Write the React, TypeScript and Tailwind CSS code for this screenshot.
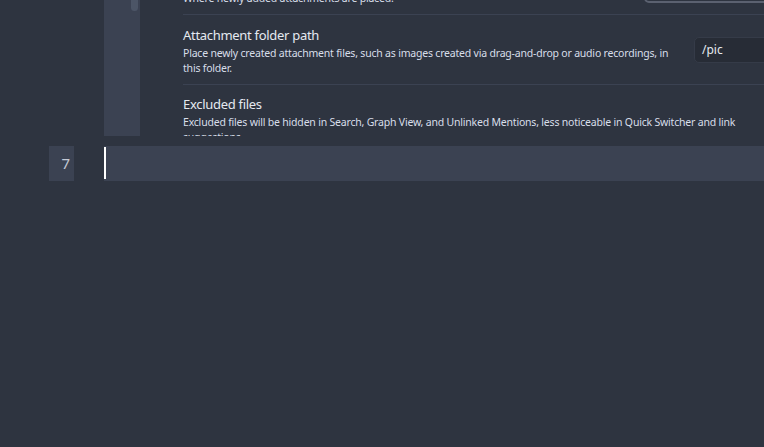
import React from "react";

export default function App() {
  const font = { fontFamily: '"Segoe UI", "Noto Sans", "Open Sans", sans-serif' };
  const title = "text-[13px] leading-[19px] tracking-[-0.3px] text-[#e5e9f0]";
  const desc = "mt-[1px] text-[10.5px] leading-[15px] tracking-[-0.2px] text-[#d8dee9]";
  return (
    <div className="w-[764px] h-[447px] bg-[#2e3440] overflow-hidden flex flex-col" style={font}>
      <div className="h-[136px] flex shrink-0 overflow-hidden">
        <div className="w-[104px] shrink-0" />
        <div className="w-[36px] shrink-0 bg-[#3b4252] relative">
          <div className="absolute left-[27px] top-[-10px] w-[7px] h-[21px] rounded-full bg-[#4c5566]" />
        </div>
        <div className="flex-1 pl-[43px] overflow-hidden">
          <div className="-mt-[40px]">
            {/* item 0 */}
            <div className="flex items-center pt-[11px] pb-[8px]">
              <div className="flex-1 min-w-0">
                <div className={title}>Default location for new attachments</div>
                <div className={desc}>Where newly added attachments are placed.</div>
              </div>
              <div className="w-[140px] h-[26px] shrink-0 ml-[8px] -mr-[20px] -mb-[2px] rounded-[5px] border-2 border-[#5b6170] bg-[#2e3440]" />
            </div>
            {/* item 1 */}
            <div className="flex border-t border-[#3b4252] pt-[11px] pb-[8px]">
              <div className="flex-1 min-w-0 pr-[16px]">
                <div className={title}>Attachment folder path</div>
                <div className={desc}>
                  Place newly created attachment files, such as images created via drag-and-drop or audio recordings, in this folder.
                </div>
              </div>
              <div className="w-[80px] shrink-0 -mr-[10px] mt-[11px] h-[26px] rounded-[5px] border border-[#353b48] bg-[#272c36] text-[12px] leading-[24px] text-[#e5e9f0] pl-[7px]">
                /pic
              </div>
            </div>
            {/* item 2 */}
            <div className="flex border-t border-[#3b4252] pt-[10px] pb-[9px]">
              <div className="flex-1 min-w-0 pr-[20px]">
                <div className={title}>Excluded files</div>
                <div className={desc}>
                  Excluded files will be hidden in Search, Graph View, and Unlinked Mentions, less noticeable in Quick Switcher and link suggestions.
                </div>
              </div>
            </div>
          </div>
        </div>
      </div>
      <div className="h-[10px] shrink-0" />
      <div className="h-[35px] flex shrink-0">
        <div className="w-[49px] shrink-0" />
        <div className="w-[25px] shrink-0 bg-[#3b4252] flex items-center justify-end pr-[4px] text-[15px] text-[#c3c9d5]">7</div>
        <div className="w-[30px] shrink-0" />
        <div className="flex-1 bg-[#3b4252] relative">
          <div className="absolute left-0 top-[1px] w-[1.5px] h-[32px] bg-white" />
        </div>
      </div>
    </div>
  );
}
